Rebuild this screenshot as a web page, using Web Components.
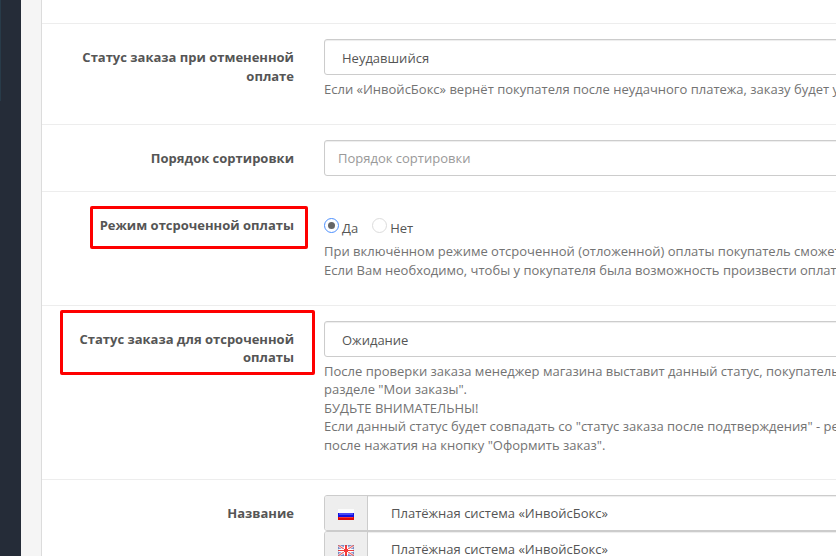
<!DOCTYPE html>
<html lang="ru">
<head>
<meta charset="utf-8">
<title>Настройки оплаты</title>
<style>
body{margin:0;font:13px/18.57px "Open Sans","Noto Sans",sans-serif;color:#555;background:#fff;overflow:hidden}
</style>
</head>
<body>
<admin-shell>
  <form-row style="height:101px">
    <span slot="label">Статус заказа при отмененной оплате</span>
    <text-field kind="select">Неудавшийся</text-field>
    <help-text>Если «ИнвойсБокс» вернёт покупателя после неудачного платежа, заказу будет у</help-text>
  </form-row>
  <form-row style="height:67px">
    <span slot="label">Порядок сортировки</span>
    <text-field kind="placeholder">Порядок сортировки</text-field>
  </form-row>
  <form-row style="height:114px">
    <span slot="label">Режим отсроченной оплаты</span>
    <mark-frame slot="mark" style="left:48px;top:14px;width:218px;height:43px"></mark-frame>
    <radio-group><radio-item checked>Да</radio-item><radio-item>Нет</radio-item></radio-group>
    <help-text style="margin-top:0">При включённом режиме отсроченной (отложенной) оплаты покупатель сможет<br>Если Вам необходимо, чтобы у покупателя была возможность произвести оплат</help-text>
  </form-row>
  <form-row style="height:174px;--label-top:8.7px">
    <span slot="label">Статус заказа для отсроченной оплаты</span>
    <mark-frame slot="mark" style="left:18px;top:4px;width:255px;height:65px"></mark-frame>
    <text-field kind="select">Ожидание</text-field>
    <help-text style="margin-top:4.7px">После проверки заказа менеджер магазина выставит данный статус, покупатель<br>разделе "Мои заказы".<br>БУДЬТЕ ВНИМАТЕЛЬНЫ!<br>Если данный статус будет совпадать со "статус заказа после подтверждения" - ре<br>после нажатия на кнопку "Оформить заказ".</help-text>
  </form-row>
  <form-row style="height:110px">
    <span slot="label">Название</span>
    <text-field kind="addon"><flag-icon slot="addon" country="ru"></flag-icon>Платёжная система «ИнвойсБокс»</text-field>
    <text-field kind="addon"><flag-icon slot="addon" country="gb"></flag-icon>Платёжная система «ИнвойсБокс»</text-field>
  </form-row>
</admin-shell>
<script>
const define = (name, html, setup) => customElements.define(name, class extends HTMLElement {
  constructor() {
    super();
    this.attachShadow({mode: 'open'}).innerHTML = html;
  }
  connectedCallback() { if (setup) setup(this); }
});

define('admin-shell', `<style>
:host{display:grid;grid-template-columns:21px 20px 1fr;width:836px;height:556px;overflow:hidden}
nav{background:linear-gradient(#283b49,#283b49) 0 0/1px 101px no-repeat #252c38}
.gutter{background:#f5f5f5}
main{border-left:1px solid #dcdcdc;background:#fff;padding-top:23px;min-width:0;overflow:hidden}
</style><nav></nav><div class="gutter"></div><main><slot></slot></main>`);

define('form-row', `<style>
:host{display:grid;grid-template-columns:252px 1fr;column-gap:30px;box-sizing:border-box;border-top:1px solid #ededed;padding-top:15px;position:relative}
.label{font-weight:700;text-align:right;padding:var(--label-top,9px) 0 0 20px}
.field{min-width:0}
</style><div class="label"><slot name="label"></slot></div><div class="field"><slot></slot></div><slot name="mark"></slot>`);

define('text-field', `<style>
:host{display:flex;box-sizing:border-box;height:36px;width:700px;border:1px solid #ccc;border-radius:3px;box-shadow:inset 0 1px 1px rgba(0,0,0,.075);overflow:hidden;line-height:18px}
.value{padding:9px 17px}
:host([kind=placeholder]) .value{padding:8px 13px;color:#999}
.addon{display:none}
:host([kind=addon]) .addon{display:flex;align-items:center;justify-content:center;box-sizing:border-box;width:43px;padding-top:3px;background:#eee;border-right:1px solid #ccc}
:host([kind=addon]) .value{padding:8px 23px}
</style><div class="addon"><slot name="addon"></slot></div><div class="value"><slot></slot></div>`);

define('help-text', `<style>
:host{display:block;margin-top:5px;color:#737373;white-space:nowrap}
</style><slot></slot>`);

define('radio-group', `<style>
:host{display:flex;gap:14px;height:35px;box-sizing:border-box;padding-top:11px}
</style><slot></slot>`);

define('radio-item', `<style>
:host{display:flex;gap:3px}
i{box-sizing:border-box;width:15px;height:15px;border:1px solid #dcdcdc;border-radius:50%;display:grid;place-items:center}
:host([checked]) i{border-color:#4d90fe}
:host([checked]) i::after{content:"";width:7px;height:7px;border-radius:50%;background:#666}
span{padding-top:1px}
</style><i></i><span><slot></slot></span>`);

define('mark-frame', `<style>
:host{position:absolute;box-sizing:border-box;border:3px solid #fe0000;border-radius:2px}
</style>`);

const flags = {
  ru: `<path fill="#fbfbfb" d="M0 0h16v4H0z"/><path fill="#1010e0" d="M0 4h16v4H0z"/><path fill="#4848f4" d="M1 4h14v2H1z"/><path fill="#e00808" d="M0 8h16v3H0z"/><path fill="#f43c3c" d="M1 8h14v1H1z"/>`,
  gb: `<path fill="#8c9bd4" d="M0 0h16v11H0z"/><path stroke="#fff" stroke-width="2.4" d="M0 0l16 11M16 0L0 11"/><path stroke="#ee6a6a" stroke-width="1.1" d="M0 0l16 11M16 0L0 11"/><path fill="#fff" d="M6 0h4v4h6v3h-6v4H6V7H0V4h6z"/><path fill="#f43a3a" d="M7 0h2v4h1v1h6v1h-6v1H9v4H7V7H6V6H0V5h6V4h1z"/><path fill="none" stroke="#31457e" opacity=".2" d="M.5.5h15v10H.5z"/>`
};
define('flag-icon', `<style>:host{display:block;width:16px;height:11px}svg{display:block}</style><svg width="16" height="11" viewBox="0 0 16 11"></svg>`,
  el => { el.shadowRoot.querySelector('svg').innerHTML = flags[el.getAttribute('country')]; });
</script>
</body>
</html>
